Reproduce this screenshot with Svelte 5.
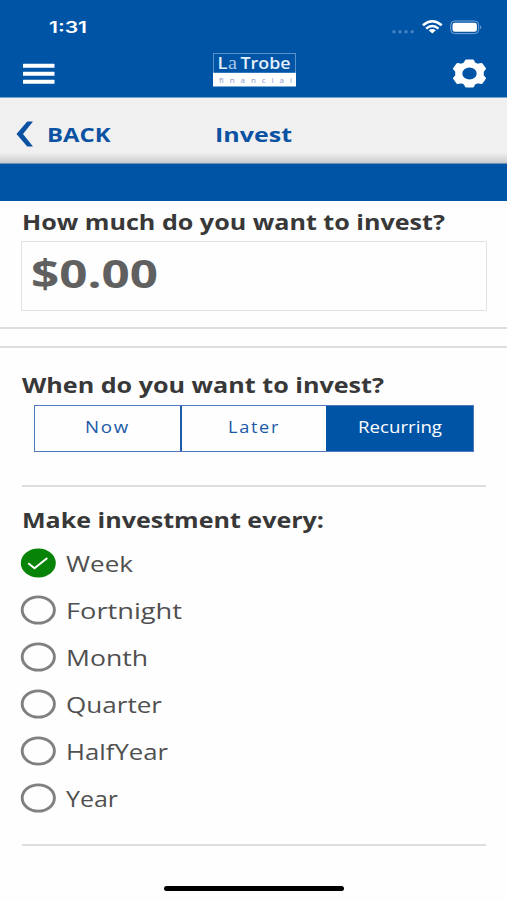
<script lang="ts">
	type Frequency = {
		name: string;
		width: number;
	};

	const frequencies: Frequency[] = [
		{ name: 'Week', width: 67 },
		{ name: 'Fortnight', width: 116 },
		{ name: 'Month', width: 82 },
		{ name: 'Quarter', width: 96 },
		{ name: 'HalfYear', width: 102 },
		{ name: 'Year', width: 52 }
	];

	const timings = [
		{ name: 'Now', width: 45 },
		{ name: 'Later', width: 52 },
		{ name: 'Recurring', width: 84 }
	];

	let timing = $state('Recurring');
	let frequency = $state('Week');
</script>

<!-- Wide label: the text is stretched to the given width -->
{#snippet label(text: string, width: number, height: number, baseline: number)}
	<svg class="label" {width} {height}>
		<text x="0" y={baseline} textLength={width} lengthAdjust="spacingAndGlyphs">{text}</text>
	</svg>
{/snippet}

<div class="app">
	<header>
		<div class="status-bar">
			<div class="time">{@render label('1:31', 38, 20, 15.2)}</div>
			<svg class="status-icons" width="94" height="20" viewBox="0 0 94 20">
				<g fill="#4682c3">
					<circle cx="5" cy="13.7" r="1.7" />
					<circle cx="11" cy="13.7" r="1.7" />
					<circle cx="17" cy="13.7" r="1.7" />
					<circle cx="23.2" cy="13.7" r="1.7" />
				</g>
				<g fill="none" stroke="#fff" stroke-width="2.5">
					<path d="M33.9 7.2 Q43.3 -0.8 52.7 7.2" />
					<path d="M37.1 10.6 Q43.3 5.4 49.5 10.6" />
				</g>
				<path d="M39.7 12.2 Q43.3 9.6 46.9 12.2 L43.3 15.4 Z" fill="#fff" />
				<rect x="61.7" y="3" width="28" height="12.6" rx="4" fill="none" stroke="#79a5d8" />
				<rect x="63.5" y="4.8" width="24.4" height="9" rx="2.3" fill="#fff" />
				<path d="M91.2 7.3 Q93.6 9.2 91.2 11.2 Z" fill="#79a5d8" />
			</svg>
		</div>
		<div class="nav">
			<button class="icon-btn" aria-label="Menu">
				<svg width="32" height="22" viewBox="0 0 32 22" fill="#fff">
					<rect x="0" y="0.8" width="31.5" height="4" rx="0.6" />
					<rect x="0" y="8.8" width="31.5" height="4" rx="0.6" />
					<rect x="0" y="16.8" width="31.5" height="4" rx="0.6" />
				</svg>
			</button>
			<div class="logo">
				<svg width="83" height="34" viewBox="0 0 83 34">
					<rect x="0.5" y="0.5" width="82" height="33" fill="#0054a6" stroke="#5a91cb" />
					<rect x="0" y="19.8" width="83" height="13.4" fill="#fff" />
					<text class="logo-name" x="4.5" y="16.4" textLength="10" lengthAdjust="spacingAndGlyphs">L</text>
					<text class="logo-serif" x="15" y="16.4" textLength="9" lengthAdjust="spacingAndGlyphs">a</text>
					<text class="logo-name" x="27.5" y="16.4" textLength="50" lengthAdjust="spacingAndGlyphs">Trobe</text>
					<text class="logo-sub" x="6" y="29.5" textLength="73">financial</text>
				</svg>
			</div>
			<button class="icon-btn" aria-label="Settings">
				<svg width="35" height="29" viewBox="-17.5 -14.5 35 29">
					<g transform="scale(1.2 1)">
						<path
							fill="#fff"
							fill-rule="evenodd"
							stroke="#fff"
							stroke-width="2"
							stroke-linejoin="round"
							d="M-2.8 -13 H2.8 L3.8 -10.4 L6.8 -8.7 L10 -9.4 L12.8 -4.8 L10.9 -2.2 V2.2 L12.8 4.8 L10 9.4 L6.8 8.7 L3.8 10.4 L2.8 13 H-2.8 L-3.8 10.4 L-6.8 8.7 L-10 9.4 L-12.8 4.8 L-10.9 2.2 V-2.2 L-12.8 -4.8 L-10 -9.4 L-6.8 -8.7 L-3.8 -10.4 Z M7 0 A7 7 0 1 0 -7 0 A7 7 0 1 0 7 0 Z"
						/>
					</g>
				</svg>
			</button>
		</div>
	</header>

	<div class="sub-header">
		<button class="back">
			<svg width="18" height="26" viewBox="0 0 18 26">
				<path d="M11.2 0.5 H17 L7 13 L17 25.5 H11.2 L0.5 13 Z" fill="#0b52a3" />
			</svg>
			{@render label('BACK', 63.5, 26, 20.5)}
		</button>
		<div class="page-title">{@render label('Invest', 77, 26, 20.5)}</div>
	</div>
	<div class="banner"></div>

	<section class="amount">
		<h2>{@render label('How much do you want to invest?', 423, 30, 22.5)}</h2>
		<div class="amount-input">{@render label('$0.00', 127, 50, 39.5)}</div>
	</section>

	<section class="schedule">
		<h2>{@render label('When do you want to invest?', 362, 30, 22.5)}</h2>
		<div class="tabs">
			{#each timings as t}
				<button class="tab" class:active={timing === t.name} onclick={() => (timing = t.name)}>
					{@render label(t.name, t.width, 24, 17)}
				</button>
			{/each}
		</div>

		<hr />

		<h2>{@render label('Make investment every:', 302, 30, 22.5)}</h2>
		<div class="options">
			{#each frequencies as f}
				<button class="option" onclick={() => (frequency = f.name)}>
					<svg width="36" height="30" viewBox="0 0 36 30">
						{#if frequency === f.name}
							<ellipse cx="18.3" cy="15" rx="17.5" ry="14.5" fill="#078307" />
							<path d="M8.3 15.3 L14.5 20.2 L27.3 10" fill="none" stroke="#fff" stroke-width="2" />
						{:else}
							<ellipse cx="18.3" cy="15" rx="16.1" ry="13.1" fill="none" stroke="#808080" stroke-width="2.9" />
						{/if}
					</svg>
					{@render label(f.name, f.width, 30, 24)}
				</button>
			{/each}
		</div>
		<hr class="last" />
	</section>

	<div class="home-indicator"></div>
</div>

<style>
	:global(body) {
		margin: 0;
		background: #fefefe;
	}

	.app {
		display: flex;
		flex-direction: column;
		width: 507px;
		height: 900px;
		overflow: hidden;
		background: #fefefe;
		font-family: 'Open Sans', 'Noto Sans', sans-serif;
	}

	button {
		padding: 0;
		border: none;
		background: none;
		font-family: inherit;
		cursor: pointer;
	}

	svg {
		display: block;
		flex: none;
	}

	.label,
	.logo svg {
		overflow: visible;
	}

	.label {
		fill: currentColor;
	}

	header {
		box-sizing: border-box;
		height: 98px;
		padding-top: 18px;
		border-bottom: 1px solid #7ba4d0;
		background: #0054a6;
	}

	.status-bar {
		display: flex;
		justify-content: space-between;
		height: 20px;
		padding: 0 24px 0 49px;
		color: #fff;
		font-family: Inter, sans-serif;
		font-size: 16px;
		font-weight: 600;
	}

	.nav {
		display: grid;
		grid-template-columns: 1fr 83px 1fr;
		align-items: center;
		height: 36px;
		margin-top: 13px;
		padding: 0 20px 0 22px;
	}

	.nav .icon-btn:first-child {
		align-self: start;
		justify-self: start;
		padding: 12px 0 0 1px;
	}

	.nav .icon-btn:last-child {
		align-self: start;
		justify-self: end;
		padding-top: 8px;
	}

	.logo-name {
		fill: #e4effa;
		font-size: 16px;
		font-weight: 600;
	}

	.logo-serif {
		fill: #a9c8e8;
		font-family: 'Liberation Serif', serif;
		font-size: 18px;
	}

	.logo-sub {
		fill: #8e98cc;
		font-size: 8px;
	}

	.sub-header {
		display: grid;
		grid-template-columns: 1fr 78px 1fr;
		align-items: center;
		box-sizing: border-box;
		height: 66px;
		padding: 6px 15px 0 16px;
		border-bottom: 1px solid #6d8fb8;
		background: linear-gradient(#f0f0f0 84%, #cccccc);
		color: #0b52a3;
		font-size: 20px;
		font-weight: 700;
	}

	.back {
		display: flex;
		align-items: center;
		gap: 13px;
		color: inherit;
		font-size: inherit;
		font-weight: inherit;
	}

	.banner {
		flex: none;
		height: 37px;
		background: #0054a6;
	}

	h2 {
		margin: 0;
		padding-left: 0.5px;
		color: #383838;
		font-size: 22px;
		font-weight: 700;
	}

	.amount {
		box-sizing: border-box;
		height: 128px;
		padding: 6px 20px 0 21px;
		border-bottom: 2px solid #dedede;
	}

	.amount-input {
		box-sizing: border-box;
		height: 70px;
		margin-top: 4px;
		padding: 6px 9px;
		border: 1px solid #e2e2e2;
		border-radius: 1px;
		color: #606060;
		font-size: 40px;
		font-weight: 700;
	}

	.schedule {
		margin-top: 17px;
		padding: 22px 21px 0;
		border-top: 2px solid #dedede;
	}

	.tabs {
		display: grid;
		grid-template-columns: 147px 144px 1fr;
		box-sizing: border-box;
		width: 440px;
		height: 47px;
		margin: 5px 0 0 13px;
		border: 1px solid #5278bd;
	}

	.tab {
		display: flex;
		align-items: center;
		justify-content: center;
		padding-bottom: 2px;
		color: #1a58a7;
		font-size: 16px;
		letter-spacing: 1.5px;
	}

	.tab:first-child {
		border-right: 2px solid #1c5aab;
	}

	.tab.active {
		background: #0054a6;
		color: #fff;
		letter-spacing: 0;
	}

	hr {
		height: 2px;
		margin: 33px 0 18px 1px;
		border: none;
		background: #dedede;
	}

	.options {
		display: flex;
		flex-direction: column;
		gap: 16.85px;
		margin-top: 13.4px;
	}

	.option {
		display: flex;
		align-items: center;
		gap: 9px;
		margin-left: -1px;
		color: #505050;
		font-size: 22px;
	}

	.option .label {
		padding-left: 1px;
	}

	hr.last {
		margin-top: 31.6px;
		margin-bottom: 0;
	}

	.home-indicator {
		width: 180px;
		height: 5px;
		margin: auto auto 9px;
		border-radius: 3px;
		background: #000;
	}
</style>
